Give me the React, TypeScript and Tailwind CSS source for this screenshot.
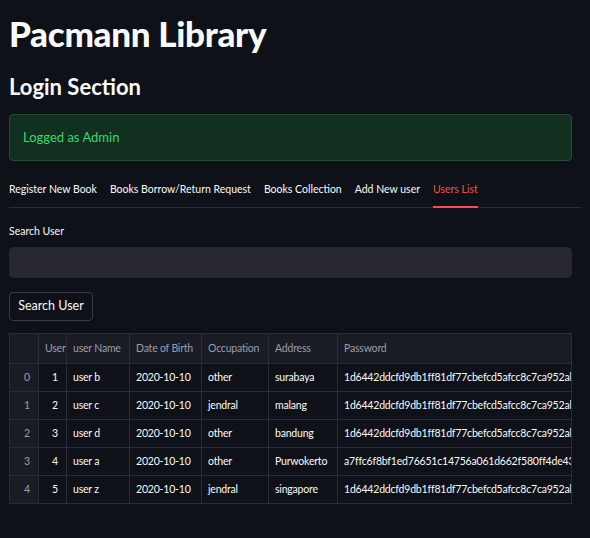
import React from "react";

const tabs = [
  "Register New Book",
  "Books Borrow/Return Request",
  "Books Collection",
  "Add New user",
  "Users List",
];

const cols = [
  { label: "", w: "w-[29px]" },
  { label: "User", w: "w-[28px]" },
  { label: "user Name", w: "w-[63px]" },
  { label: "Date of Birth", w: "w-[72px]" },
  { label: "Occupation", w: "w-[67px]" },
  { label: "Address", w: "w-[69px]" },
  { label: "Password", w: "w-[300px]" },
];

const rows = [
  ["1", "user b", "2020-10-10", "other", "surabaya", "1d6442ddcfd9db1ff81df77cbefcd5afcc8c7ca952ab3101ede17a84b866d3f3"],
  ["2", "user c", "2020-10-10", "jendral", "malang", "1d6442ddcfd9db1ff81df77cbefcd5afcc8c7ca952ab3101ede17a84b866d3f3"],
  ["3", "user d", "2020-10-10", "other", "bandung", "1d6442ddcfd9db1ff81df77cbefcd5afcc8c7ca952ab3101ede17a84b866d3f3"],
  ["4", "user a", "2020-10-10", "other", "Purwokerto", "a7ffc6f8bf1ed76651c14756a061d662f580ff4de43b49fa82d80a4b80f8434a"],
  ["5", "user z", "2020-10-10", "jendral", "singapore", "1d6442ddcfd9db1ff81df77cbefcd5afcc8c7ca952ab3101ede17a84b866d3f3"],
];

function Tabs() {
  return (
    <div className="mt-[21px] flex gap-[13px] border-b border-[#2b2d36] text-[10.5px] leading-none">
      {tabs.map((t, i) => {
        const active = i === tabs.length - 1;
        return (
          <div
            key={t}
            className={`whitespace-nowrap pb-[11px] pt-[2px] ${
              active ? "text-[#ff4b4b] border-b-2 border-[#ff4b4b] -mb-px" : "text-[#fafafa]"
            }`}
          >
            {t}
          </div>
        );
      })}
    </div>
  );
}

function UsersTable() {
  return (
    <div className="mt-[12px] w-[563px] overflow-hidden border border-[#2b2d36] text-[10.5px] tracking-[-0.2px] text-[#fafafa]">
      <div className="flex h-[29px] bg-[#1a1c24] text-[#9a9daa]">
        {cols.map((c, i) => (
          <div
            key={i}
            className={`${c.w} shrink-0 flex items-center border-r border-[#2b2d36] px-[6px] whitespace-nowrap overflow-hidden`}
          >
            {c.label}
          </div>
        ))}
      </div>
      {rows.map((r, ri) => (
        <div key={ri} className="flex h-[28px] border-t border-[#2b2d36]">
          <div className="w-[29px] shrink-0 flex items-center justify-end pr-[8px] bg-[#1a1c24] text-[#9a9daa] border-r border-[#2b2d36]">
            {ri}
          </div>
          {r.map((v, ci) => (
            <div
              key={ci}
              className={`${cols[ci + 1].w} shrink-0 flex items-center border-r border-[#2b2d36] whitespace-nowrap overflow-hidden ${
                ci === 0 ? "justify-end pr-[8px]" : "px-[6px]"
              }`}
            >
              {v}
            </div>
          ))}
        </div>
      ))}
    </div>
  );
}

export default function App() {
  return (
    <div className="min-h-[538px] w-[590px] bg-[#0e1117] px-[9px] pt-[9px] pb-8 font-['Lato',sans-serif] text-[#fafafa]">
      <h1 className="text-[35px] font-black leading-[48px] tracking-[-0.3px]">Pacmann Library</h1>
      <h2 className="mt-[16px] text-[22px] font-bold leading-[28px]">Login Section</h2>
      <div className="mt-[13px] h-[47px] w-[563px] rounded-[4px] border border-[#1d5130] bg-[#12301f] px-[13px] flex items-center text-[13px] text-[#3dd56d]">
        Logged as Admin
      </div>
      <Tabs />
      <div className="mt-[18px] text-[10.5px] leading-none">Search User</div>
      <div className="mt-[11px] h-[31px] w-[563px] rounded-[5px] bg-[#262730]" />
      <button className="mt-[14px] h-[29px] w-[84px] rounded-[4px] border border-[#3a3c45] text-[12.5px] text-[#fafafa]">
        Search User
      </button>
      <UsersTable />
    </div>
  );
}
